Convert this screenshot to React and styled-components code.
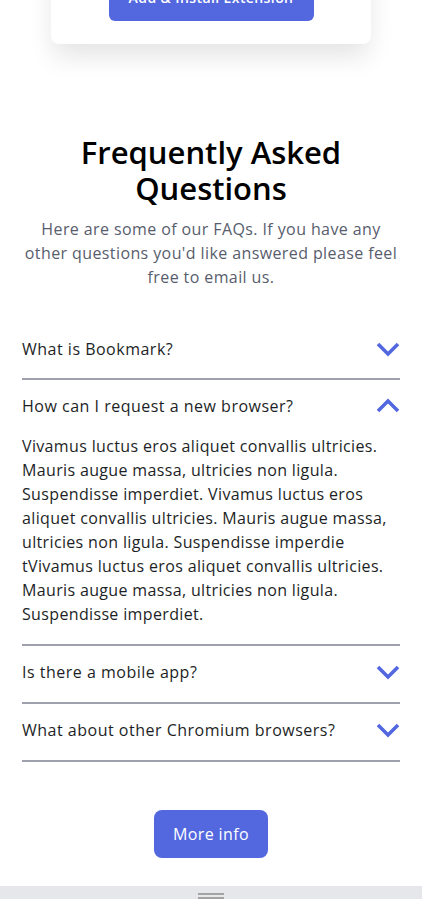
import React, { useState } from "react";
import styled, { createGlobalStyle } from "styled-components";

const GlobalStyle = createGlobalStyle`
  * { box-sizing: border-box; }
  html, body { margin: 0; padding: 0; background: #ffffff; }
  body {
    font-family: "Open Sans", "Liberation Sans", sans-serif;
    color: #1d1f26;
    -webkit-font-smoothing: antialiased;
  }
`;

const Page = styled.div`
  width: 422px;
  overflow: hidden;
  display: flex;
  flex-direction: column;
  align-items: center;
`;

const Card = styled.div`
  margin-top: -51px;
  width: 320px;
  padding: 24px 0 23px;
  background: #fff;
  border-radius: 8px;
  box-shadow: 0 14px 26px -2px rgba(0, 0, 0, 0.11);
  display: flex;
  justify-content: center;
`;

const PrimaryButton = styled.button`
  border: none;
  background: #5368df;
  color: #fff;
  border-radius: ${(p) => (p.$small ? "6px" : "8px")};
  font-family: inherit;
  font-size: ${(p) => (p.$small ? "14px" : "16px")};
  font-weight: ${(p) => (p.$small ? 600 : 400)};
  letter-spacing: 0.4px;
  height: 48px;
  width: ${(p) => (p.$small ? "205px" : "auto")};
  padding: ${(p) => (p.$small ? "0" : "0 19px")};
  cursor: pointer;
`;

const FaqSection = styled.section`
  width: 100%;
  padding: 90px 22px 0;
  display: flex;
  flex-direction: column;
  align-items: center;
`;

const Title = styled.h2`
  margin: 0;
  font-size: 31px;
  line-height: 36px;
  font-weight: 600;
  color: #000;
  text-align: center;
  width: 290px;
`;

const Intro = styled.p`
  margin: 11px 0 0;
  font-size: 16px;
  line-height: 24px;
  letter-spacing: 0.4px;
  color: #585d6d;
  text-align: center;
`;

const List = styled.div`
  margin-top: 33px;
  width: 100%;
  display: flex;
  flex-direction: column;
`;

const Item = styled.div`
  border-bottom: 2px solid #9ea1ad;
  padding: ${(p) => (p.$first ? "15px 0 17px" : "14px 0 18px")};
`;

const QuestionRow = styled.button`
  width: 100%;
  border: none;
  background: none;
  padding: 0;
  display: flex;
  align-items: center;
  justify-content: space-between;
  font-family: inherit;
  font-size: 16px;
  line-height: 24px;
  letter-spacing: 0.5px;
  color: #1d1f26;
  text-align: left;
  cursor: pointer;
`;

const Chevron = styled.svg`
  flex: none;
  width: 24px;
  height: 16px;
  transform: ${(p) => (p.$open ? "rotate(180deg)" : "none")};
`;

const Answer = styled.p`
  margin: 16px 0 0;
  font-size: 16px;
  line-height: 24px;
  letter-spacing: 0.35px;
  color: #1d1f26;
`;

const Footer = styled.div`
  margin-top: 48px;
  display: flex;
  justify-content: center;
`;

const BottomBar = styled.div`
  margin-top: 28px;
  width: 100%;
  height: 40px;
  background: #e5e7eb;
  display: flex;
  justify-content: center;
  padding-top: 7px;
`;

const Handle = styled.div`
  width: 26px;
  height: 6px;
  border-top: 2px solid #a3a3a3;
  border-bottom: 2px solid #a3a3a3;
`;

const faqs = [
  { q: "What is Bookmark?", a: "" },
  {
    q: "How can I request a new browser?",
    a: "Vivamus luctus eros aliquet convallis ultricies. Mauris augue massa, ultricies non ligula. Suspendisse imperdiet. Vivamus luctus eros aliquet convallis ultricies. Mauris augue massa, ultricies non ligula. Suspendisse imperdie tVivamus luctus eros aliquet convallis ultricies. Mauris augue massa, ultricies non ligula. Suspendisse imperdiet.",
  },
  { q: "Is there a mobile app?", a: "" },
  { q: "What about other Chromium browsers?", a: "" },
];

function ChevronIcon({ open }) {
  return (
    <Chevron $open={open} viewBox="0 0 24 16" fill="none">
      <path d="M2 3 L12 13 L22 3" stroke="#5368df" strokeWidth="3.6" />
    </Chevron>
  );
}

export default function App() {
  const [open, setOpen] = useState(1);
  return (
    <>
      <GlobalStyle />
      <Page>
        <Card>
          <PrimaryButton $small>Add &amp; Install Extension</PrimaryButton>
        </Card>
        <FaqSection>
          <Title>Frequently Asked Questions</Title>
          <Intro>
            Here are some of our FAQs. If you have any other questions you'd
            like answered please feel free to email us.
          </Intro>
          <List>
            {faqs.map((f, i) => (
              <Item key={f.q} $first={i === 0}>
                <QuestionRow onClick={() => setOpen(open === i ? -1 : i)}>
                  <span>{f.q}</span>
                  <ChevronIcon open={open === i} />
                </QuestionRow>
                {open === i && <Answer>{f.a}</Answer>}
              </Item>
            ))}
          </List>
          <Footer>
            <PrimaryButton>More info</PrimaryButton>
          </Footer>
        </FaqSection>
        <BottomBar>
          <Handle />
        </BottomBar>
      </Page>
    </>
  );
}
